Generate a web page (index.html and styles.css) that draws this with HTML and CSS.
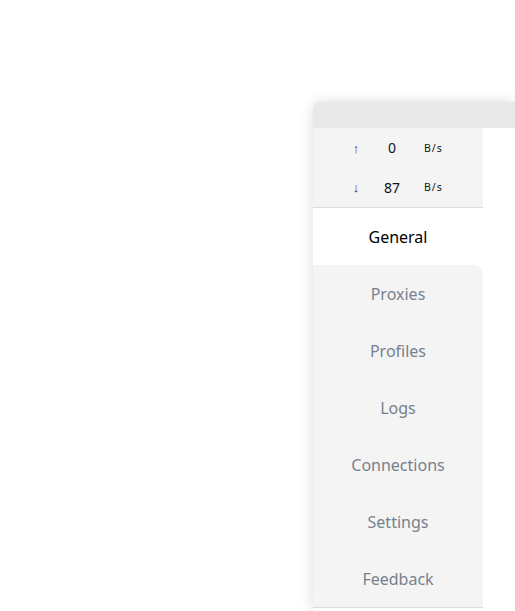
FILE: index.html
```html
<!DOCTYPE html>
<html>
<head>
<meta charset="utf-8">
<link rel="stylesheet" href="styles.css">
</head>
<body>
<div class="window">
  <div class="titlebar"></div>
  <div class="main">
    <aside class="sidebar">
      <div class="traffic">
        <div class="row"><span class="arrow">↑</span><span class="num">0</span><span class="unit">B/s</span></div>
        <div class="row"><span class="arrow">↓</span><span class="num">87</span><span class="unit">B/s</span></div>
      </div>
      <div class="item active">General</div>
      <nav class="nav">
        <div class="item">Proxies</div>
        <div class="item">Profiles</div>
        <div class="item">Logs</div>
        <div class="item">Connections</div>
        <div class="item">Settings</div>
        <div class="item">Feedback</div>
      </nav>
    </aside>
    <section class="content"></section>
  </div>
</div>
</body>
</html>
```
FILE: styles.css
```css
html, body {
  margin: 0;
  padding: 0;
  background: #ffffff;
  overflow: hidden;
}
body {
  font-family: "Noto Sans", "Open Sans", sans-serif;
  height: 611px;
}
.window {
  margin: 102px 0 0 313px;
  height: 509px;
  border-radius: 7px 0 0 0;
  box-shadow: 0 0 14px rgba(0, 0, 0, 0.14);
  overflow: hidden;
  background: #ffffff;
}
.titlebar {
  height: 26px;
  background: #e9e9e9;
}
.main {
  display: flex;
}
.sidebar {
  width: 170px;
  flex: none;
}
.traffic {
  background: #f4f4f4;
  border-bottom: 1px solid #dcdcdc;
}
.row {
  height: 39.5px;
  display: grid;
  grid-template-columns: 20px 52px auto;
  align-items: center;
  padding-left: 33px;
}
.arrow {
  text-align: center;
  color: #4a1a78;
  font-size: 13px;
  font-weight: 600;
}
.num {
  text-align: center;
  font-size: 14px;
  color: #111;
}
.unit {
  padding-left: 6px;
  font-size: 10.5px;
  letter-spacing: 1px;
  color: #111;
}
.item {
  height: 57px;
  display: flex;
  align-items: center;
  justify-content: center;
  font-size: 16px;
  color: #77818d;
}
.item.active {
  color: #000;
  background: #fff;
}
.nav {
  background: #f4f4f4;
  border-top-right-radius: 10px;
  border-bottom: 1px solid #dcdcdc;
}
.content {
  flex: 1;
  background: #fff;
}
```
